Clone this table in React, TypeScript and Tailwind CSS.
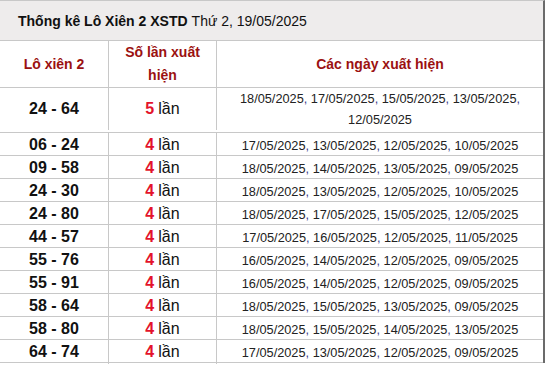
const rows: { pair: string; count: number; dates: string[] }[] = [
  { pair: "24 - 64", count: 5, dates: ["18/05/2025", "17/05/2025", "15/05/2025", "13/05/2025", "12/05/2025"] },
  { pair: "06 - 24", count: 4, dates: ["17/05/2025", "13/05/2025", "12/05/2025", "10/05/2025"] },
  { pair: "09 - 58", count: 4, dates: ["18/05/2025", "14/05/2025", "13/05/2025", "09/05/2025"] },
  { pair: "24 - 30", count: 4, dates: ["18/05/2025", "13/05/2025", "12/05/2025", "10/05/2025"] },
  { pair: "24 - 80", count: 4, dates: ["18/05/2025", "17/05/2025", "15/05/2025", "12/05/2025"] },
  { pair: "44 - 57", count: 4, dates: ["17/05/2025", "16/05/2025", "12/05/2025", "11/05/2025"] },
  { pair: "55 - 76", count: 4, dates: ["16/05/2025", "14/05/2025", "12/05/2025", "09/05/2025"] },
  { pair: "55 - 91", count: 4, dates: ["16/05/2025", "14/05/2025", "12/05/2025", "09/05/2025"] },
  { pair: "58 - 64", count: 4, dates: ["18/05/2025", "15/05/2025", "13/05/2025", "09/05/2025"] },
  { pair: "58 - 80", count: 4, dates: ["18/05/2025", "15/05/2025", "14/05/2025", "13/05/2025"] },
  { pair: "64 - 74", count: 4, dates: ["17/05/2025", "13/05/2025", "12/05/2025", "09/05/2025"] },
];

export default function App() {
  return (
    <div className="w-[545px] h-[367px] overflow-hidden bg-white font-['Liberation_Sans',Arial,sans-serif] text-[#111]">
      <div className="w-[545px] border-t border-[#c8c8c8] border-r-2 border-r-[#6b6b6b]">
        <div className="h-[40px] bg-[#eeecec] border-b border-[#c8c8c8] flex items-center px-[18px] text-[14px] leading-none">
          <span className="font-bold">Thống kê Lô Xiên 2 XSTD</span>
          <span className="ml-[4px]">Thứ 2, 19/05/2025</span>
        </div>

        {/* column headings */}
        <div className="grid grid-cols-[109px_108px_1fr] h-[47px] border-b border-[#c8c8c8] text-[14px] font-bold text-[#9b1111]">
          <div className="flex items-center justify-center border-r border-[#c8c8c8]">Lô xiên 2</div>
          <div className="flex items-center justify-center text-center leading-[23px] border-r border-[#c8c8c8] px-2">Số lần xuất hiện</div>
          <div className="flex items-center justify-center">Các ngày xuất hiện</div>
        </div>

        {rows.map((r, i) => (
          <div
            key={r.pair}
            className={`grid grid-cols-[109px_108px_1fr] border-b border-[#c8c8c8] ${i === 0 ? "h-[45px] pb-[3px]" : "h-[23px]"}`}
          >
            <div className="flex items-center justify-center border-r border-[#c8c8c8] text-[16px] font-bold">{r.pair}</div>
            <div className="flex items-center justify-center border-r border-[#c8c8c8] text-[16px]">
              <span className="font-bold text-[#e3132b] mr-[4px]">{r.count}</span>
              <span>lần</span>
            </div>
            <div className="flex items-center justify-center text-center text-[12.75px] leading-[21px] text-[#222] px-[20px]">
              <span>
                {r.dates.map((d, j) => (
                  <span key={d + j}>
                    {d}
                    {j < r.dates.length - 1 && <span className="text-[#3c3c8a]">, </span>}
                  </span>
                ))}
              </span>
            </div>
          </div>
        ))}
      </div>
    </div>
  );
}
